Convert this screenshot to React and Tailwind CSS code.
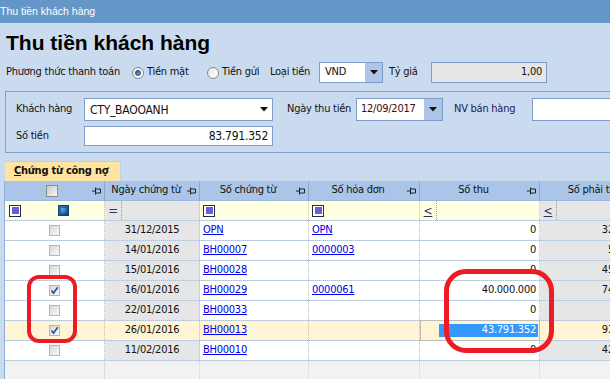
import React from "react";

function Pin() {
  return (
    <svg width="10" height="8" viewBox="0 0 10 8" className="shrink-0">
      <path d="M0 4H3.5M3.5 0.5V7.5M3.5 2H8.5V6H3.5" stroke="#222" strokeWidth="1" fill="none" />
    </svg>
  );
}

function FilterSquare() {
  return (
    <div className="w-[12px] h-[12px] border-[1.5px] border-[#2a2a55] bg-white p-[1.5px] shrink-0">
      <div className="w-full h-full bg-[#6a5fd6]" />
    </div>
  );
}

function CheckBox({ checked }) {
  return (
    <div className="w-[11px] h-[11px] border border-[#a9b8cf] bg-gradient-to-br from-[#d6d6d6] to-[#fafafa] flex items-center justify-center shrink-0">
      {checked && (
        <svg width="9" height="9" viewBox="0 0 9 9">
          <path d="M1.5 4.5L3.5 7L7.8 1.2" stroke="#2f4f9c" strokeWidth="1.7" fill="none" />
        </svg>
      )}
    </div>
  );
}

function Arrow() {
  return (
    <svg width="8" height="5" viewBox="0 0 8 5">
      <path d="M0 0H8L4 4.5Z" fill="#111" />
    </svg>
  );
}

function Radio({ on }) {
  return (
    <div className="w-[12px] h-[12px] rounded-full border border-[#8a8a8a] bg-gradient-to-br from-[#e8e8e8] to-[#ffffff] flex items-center justify-center shrink-0">
      {on && <div className="w-[6px] h-[6px] rounded-full bg-gradient-to-br from-[#1d5fa8] to-[#5cb0ec] border border-[#1b4b86]" />}
    </div>
  );
}

function LessEq() {
  return (
    <span className="w-[17px] h-full flex items-center justify-center border-r border-dotted border-[#9a9a9a]">
      <span className="text-[12px] leading-none text-[#33335a] underline decoration-[#33335a] underline-offset-[1px]">&lt;</span>
    </span>
  );
}

const rows = [
  { date: "31/12/2015", ct: "OPN", hd: "OPN", thu: "0", phai: "32.100.000" },
  { date: "14/01/2016", ct: "BH00007", hd: "0000003", thu: "0", phai: "5.000.000" },
  { date: "15/01/2016", ct: "BH00028", hd: "", thu: "0", phai: "45.000.000" },
  { date: "16/01/2016", ct: "BH00029", hd: "0000061", thu: "40.000.000", phai: "74.000.000", checked: true },
  { date: "22/01/2016", ct: "BH00033", hd: "", thu: "0", phai: "" },
  { date: "26/01/2016", ct: "BH00013", hd: "", thu: "43.791.352", phai: "93.791.352", checked: true, hl: true },
  { date: "11/02/2016", ct: "BH00010", hd: "", thu: "0", phai: "42.000.000" },
];

export default function App() {
  return (
    <div className="w-[610px] h-[379px] overflow-hidden relative bg-[#CADBF0] font-['DejaVu_Sans_Condensed','Liberation_Sans',Arial,sans-serif] text-[11px] tracking-[-0.25px] text-[#111]">
      {/* title bar */}
      <div className="h-[23px] bg-[#6496C8] text-white text-[10.5px] tracking-normal flex items-center font-['Liberation_Sans',Arial,sans-serif]">Thu tiền khách hàng</div>
      {/* heading */}
      <div className="h-[39px] pl-[6px] pt-[7px] text-[21px] font-bold leading-[26px] tracking-normal text-black whitespace-nowrap font-['Liberation_Sans',Arial,sans-serif]">Thu tiền khách hàng</div>
      {/* payment row */}
      <div className="h-[21px] flex items-center pl-[6px] whitespace-nowrap">
        <span className="w-[126px] shrink-0">Phương thức thanh toán</span>
        <div className="w-[75px] shrink-0 flex items-center gap-[3px]">
          <Radio on />
          <span>Tiền mặt</span>
        </div>
        <div className="w-[63px] shrink-0 flex items-center gap-[3px]">
          <Radio />
          <span>Tiền gửi</span>
        </div>
        <span className="w-[49px] shrink-0">Loại tiền</span>
        <div className="w-[64px] shrink-0 h-[21px] border border-[#7D9CC8] bg-white flex items-center">
          <span className="flex-1 pl-[5px]">VND</span>
          <div className="w-[17px] h-full bg-[#ADC6E8] flex items-center justify-center"><Arrow /></div>
        </div>
        <span className="ml-[6px] w-[42px] shrink-0">Tỷ giá</span>
        <div className="w-[116px] shrink-0 h-[21px] border border-[#7D9CC8] bg-[#E6E6E6] flex items-center justify-end pr-[4px]">1,00</div>
      </div>
      {/* group box */}
      <div className="mt-[8px] ml-[5px] h-[62px] border-t border-l border-b border-[#7FA0CC] pt-[6px] whitespace-nowrap">
        <div className="flex items-center h-[23px]">
          <span className="w-[78px] shrink-0 pl-[10px]">Khách hàng</span>
          <div className="w-[189px] shrink-0 h-[23px] border border-[#7D9CC8] bg-white flex items-center">
            <span className="flex-1 pl-[5px] text-[12px]">CTY_BAOOANH</span>
            <div className="w-[17px] h-full flex items-center justify-center"><Arrow /></div>
          </div>
          <span className="ml-[14px] w-[69px] shrink-0">Ngày thu tiền</span>
          <div className="w-[87px] shrink-0 h-[23px] border border-[#7D9CC8] bg-white flex items-center">
            <span className="flex-1 pl-[4px] text-[#3a0a0a]">12/09/2017</span>
            <div className="w-[18px] h-full bg-[#ADC6E8] flex items-center justify-center"><Arrow /></div>
          </div>
          <span className="ml-[11px] w-[78px] shrink-0 text-[#1a1a50]">NV bán hàng</span>
          <div className="w-[100px] shrink-0 h-[23px] border border-[#7D9CC8] bg-white" />
        </div>
        <div className="flex items-center h-[20px] mt-[5px]">
          <span className="w-[78px] shrink-0 pl-[10px]">Số tiền</span>
          <div className="w-[189px] shrink-0 h-[20px] border border-[#7D9CC8] bg-white flex items-center justify-end pr-[4px] text-[12px]">83.791.352</div>
        </div>
      </div>
      {/* tab */}
      <div className="mt-[8px] ml-[5px] w-[116px] h-[20px] bg-[#FFE3A0] border-t border-r border-[#C2CFE0] flex items-center pl-[9px] font-bold text-[11px] whitespace-nowrap">
        <span><span className="underline">C</span>hứng từ công nợ</span>
      </div>
      {/* grid */}
      <div className="ml-[4px] border-l border-[#8DAED8] w-[720px] whitespace-nowrap">
        {/* header */}
        <div className="flex h-[20px] bg-[#AAC5E8] border-b border-[#9DB8DD]">
          <div className="w-[100px] shrink-0 border-r border-[#86A8D4] flex items-center">
            <div className="flex-1 flex justify-center pl-[6px]">
              <div className="w-[12px] h-[12px] border border-[#8c8c8c] bg-gradient-to-br from-[#c8c8c8] to-[#f8f8f8]" />
            </div>
            <div className="pr-[2px]"><Pin /></div>
          </div>
          <div className="w-[95px] shrink-0 border-r border-[#86A8D4] flex items-center">
            <span className="flex-1 text-center">Ngày chứng từ</span>
            <div className="pr-[2px]"><Pin /></div>
          </div>
          <div className="w-[109px] shrink-0 border-r border-[#86A8D4] flex items-center">
            <span className="flex-1 text-center">Số chứng từ</span>
            <div className="pr-[2px]"><Pin /></div>
          </div>
          <div className="w-[111px] shrink-0 border-r border-[#86A8D4] flex items-center">
            <span className="flex-1 text-center">Số hóa đơn</span>
            <div className="pr-[2px]"><Pin /></div>
          </div>
          <div className="w-[120px] shrink-0 border-r border-[#86A8D4] flex items-center">
            <span className="flex-1 text-center">Số thu</span>
            <div className="pr-[2px]"><Pin /></div>
          </div>
          <div className="w-[119px] shrink-0 flex items-center">
            <span className="flex-1 text-center pr-[10px]">Số phải thu</span>
          </div>
        </div>
        {/* filter row */}
        <div className="flex h-[20px] border-b border-dotted border-[#BDBDBD]">
          <div className="w-[100px] shrink-0 bg-[#FFFFE1] border-r border-dotted border-[#BDBDBD] flex items-center pl-[4px]">
            <FilterSquare />
            <div className="ml-[37px] w-[11px] h-[11px] border border-[#1f3f66] bg-gradient-to-br from-[#2a78b8] to-[#0d4a80] p-[2px]">
              <div className="w-full h-full bg-gradient-to-br from-[#5cb3e8] to-[#1a6aa8]" />
            </div>
          </div>
          <div className="w-[95px] shrink-0 bg-[#E6E6E6] border-r border-dotted border-[#BDBDBD] flex items-center">
            <span className="w-[17px] h-full flex items-center justify-center text-[13px] leading-none text-[#33335a] border-r border-dotted border-[#9a9a9a]">=</span>
          </div>
          <div className="w-[109px] shrink-0 bg-[#FFFFE1] border-r border-dotted border-[#BDBDBD] flex items-center pl-[3px]">
            <FilterSquare />
          </div>
          <div className="w-[111px] shrink-0 bg-[#FFFFE1] border-r border-dotted border-[#BDBDBD] flex items-center pl-[3px]">
            <FilterSquare />
          </div>
          <div className="w-[120px] shrink-0 bg-[#FFFFE1] border-r border-dotted border-[#BDBDBD] flex items-center">
            <LessEq />
          </div>
          <div className="w-[119px] shrink-0 bg-[#E6E6E6] flex items-center">
            <LessEq />
          </div>
        </div>
        {/* data rows */}
        {rows.map((r, i) => {
          const white = r.hl ? "bg-[#FFF4D3]" : "bg-white";
          const grey = r.hl ? "bg-[#FFF4D3]" : "bg-[#E6E6E6]";
          return (
            <div key={i} className="flex h-[20px] border-b border-dotted border-[#BDBDBD]">
              <div className={`w-[100px] shrink-0 ${white} border-r border-dotted border-[#BDBDBD] flex items-center pl-[44px]`}>
                <CheckBox checked={r.checked} />
              </div>
              <div className={`w-[95px] shrink-0 ${grey} border-r border-dotted border-[#BDBDBD] flex items-center justify-center`}>{r.date}</div>
              <div className={`w-[109px] shrink-0 ${white} border-r border-dotted border-[#BDBDBD] flex items-center pl-[3px]`}>
                <span className="text-[#0000EE] underline">{r.ct}</span>
              </div>
              <div className={`w-[111px] shrink-0 ${white} border-r border-dotted border-[#BDBDBD] flex items-center pl-[3px]`}>
                {r.hd && <span className="text-[#0000EE] underline">{r.hd}</span>}
              </div>
              {r.hl ? (
                <div className="w-[120px] shrink-0 bg-[#FFF4D3] border border-[#BDBDBD] -my-px h-[21px] flex items-center justify-end pr-[1px]">
                  <span className="w-[99px] h-[13px] bg-[#3399FF] text-white flex items-center justify-end pr-[2px]">{r.thu}</span>
                </div>
              ) : (
                <div className={`w-[120px] shrink-0 ${white} border-r border-dotted border-[#BDBDBD] flex items-center justify-end pr-[3px]`}>{r.thu}</div>
              )}
              <div className={`w-[119px] shrink-0 ${grey} flex items-center justify-end pr-[3px]`}>{r.phai}</div>
            </div>
          );
        })}
        {/* empty area */}
        <div className="flex h-[40px] bg-[#F2F2F2]">
          <div className="w-[100px] shrink-0 border-r border-[#D8D8D8]" />
          <div className="w-[95px] shrink-0 border-r border-dotted border-[#D0D0D0]" />
          <div className="w-[109px] shrink-0 border-r border-dotted border-[#D0D0D0]" />
          <div className="w-[111px] shrink-0 border-r border-dotted border-[#D0D0D0]" />
          <div className="w-[120px] shrink-0 border-r border-dotted border-[#D0D0D0]" />
        </div>
      </div>
      {/* red annotations */}
      <div className="absolute left-[27px] top-[275px] w-[50px] h-[68px] border-[4px] border-[#EC1C24] rounded-[12px]" />
      <div className="absolute left-[444px] top-[269px] w-[110px] h-[84px] border-[5px] border-[#EC1C24] rounded-[22px]" />
    </div>
  );
}
